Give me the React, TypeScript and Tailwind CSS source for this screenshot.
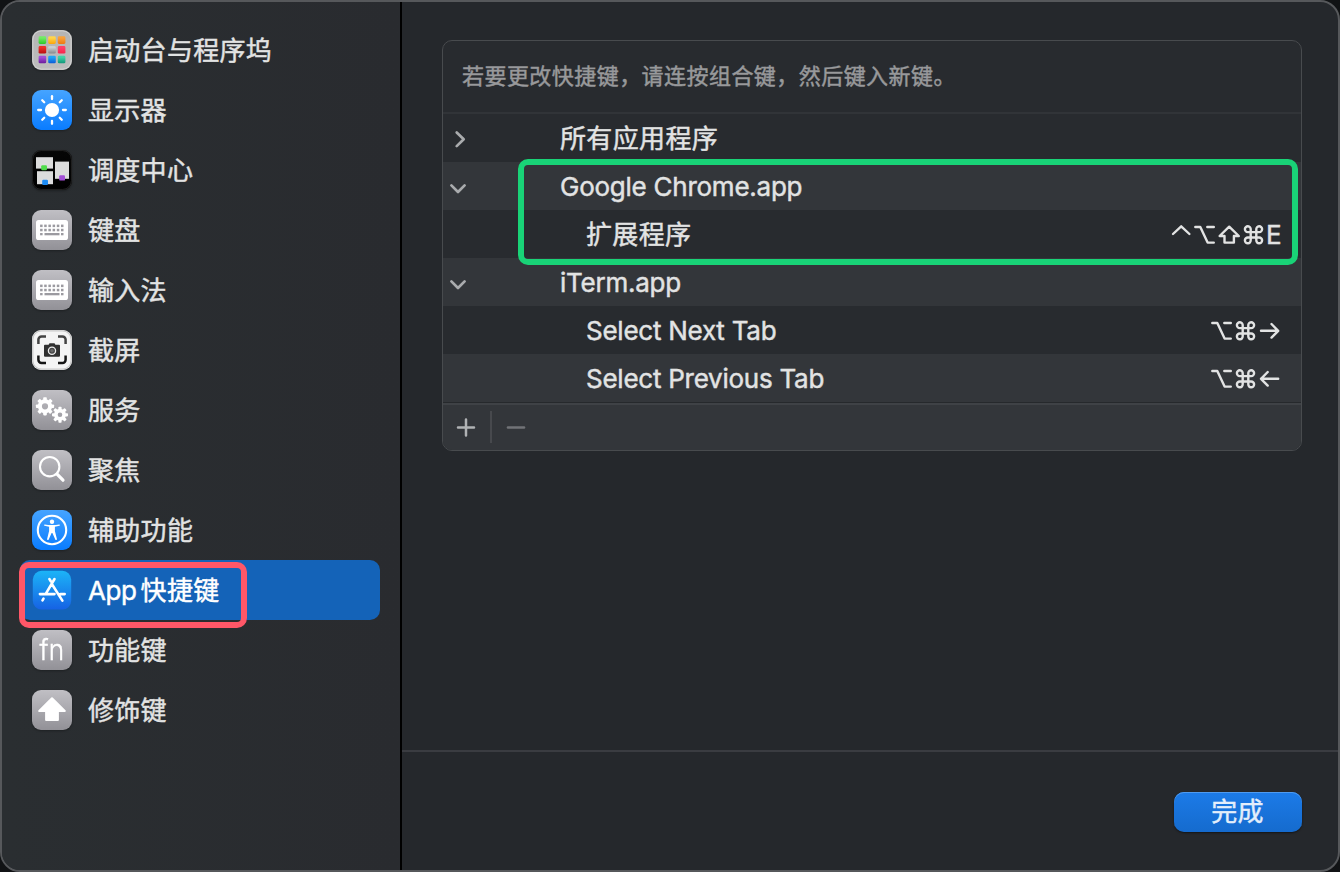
import type { ReactNode } from 'react';

function Tile({ from, to, children, id }: { from: string; to: string; id: string; children?: ReactNode }) {
  return (
    <svg viewBox="0 0 40 40" className="size-10 shrink-0 overflow-visible drop-shadow-[0_1px_1px_rgba(0,0,0,0.3)]">
      <defs>
        <linearGradient id={id} x1="0" y1="0" x2="0" y2="1">
          <stop offset="0" stopColor={from} />
          <stop offset="1" stopColor={to} />
        </linearGradient>
      </defs>
      <rect width="40" height="40" rx="9" fill={`url(#${id})`} />
      {children}
    </svg>
  );
}

const GREY_TOP = '#c0bfc4';
const GREY_BOTTOM = '#929197';

function LaunchpadIcon() {
  const tiles = [
    ['#72ec64', '#2ccb2c'], ['#ffd54b', '#fba60c'], ['#f9a13a', '#ee7a12'],
    ['#ef2f2a', '#b80f0f'], ['#c9ced1', '#86898c'], ['#ff3f68', '#f9234b'],
    ['#a44fd8', '#6a1a9c'], ['#22a6f4', '#0b5ad8'], ['#3fd3a6', '#12977a'],
  ];
  return (
    <Tile id="launchpad" from="#b4b4b4" to="#bdbdbd">
      <rect x="0.9" y="0.9" width="38.2" height="38.2" rx="8.4" fill="none" stroke="#d2d2d2" strokeWidth="1" />
      {tiles.map(([a, b], i) => (
        <g key={a}>
          <defs>
            <linearGradient id={`lp${i}`} x1="0" y1="0" x2="0" y2="1">
              <stop offset="0.2" stopColor={a} />
              <stop offset="1" stopColor={b} />
            </linearGradient>
          </defs>
          <rect x={6.6 + (i % 3) * 9.6} y={6.3 + Math.floor(i / 3) * 9.7} width="7.6" height="7.6" rx="1.4" fill={`url(#lp${i})`} />
        </g>
      ))}
    </Tile>
  );
}

function DisplayIcon() {
  return (
    <Tile id="display" from="#46a4ff" to="#0a7cff">
      <circle cx="20" cy="20" r="7.1" fill="#fff" />
      {[0, 45, 90, 135, 180, 225, 270, 315].map((a) => (
        <line key={a} x1="20" y1="6.200" x2="20" y2="9" stroke="#fff" strokeWidth="2.3" strokeLinecap="round" transform={`rotate(${a} 20 20)`} />
      ))}
    </Tile>
  );
}

function MissionControlIcon() {
  return (
    <Tile id="mission" from="#060606" to="#000000">
      <rect x="0.6" y="0.6" width="38.8" height="38.8" rx="8.6" fill="none" stroke="#2b2b2b" strokeWidth="0.8" />
      <rect x="4" y="7.2" width="17" height="11.4" fill="#dcdcdc" />
      <rect x="5" y="21.2" width="16" height="13" fill="#dcdcdc" />
      <rect x="23" y="11.6" width="14" height="17.2" fill="#dcdcdc" />
      <rect x="9.2" y="15.2" width="5.8" height="5" rx="1.2" fill="#4fdc4a" />
      <rect x="10.2" y="29.8" width="5.8" height="5.2" rx="1.2" fill="#1d8cf5" />
      <rect x="27.2" y="25.2" width="5.8" height="5.4" rx="1.2" fill="#a34fd6" />
    </Tile>
  );
}

function KeyboardIcon({ id }: { id: string }) {
  const cols = [8.1, 12.2, 16.4, 20.6, 24.8, 29];
  return (
    <Tile id={id} from={GREY_TOP} to={GREY_BOTTOM}>
      <rect x="4" y="10" width="32" height="20" rx="2.6" fill="#fff" />
      <g fill="#9b9aa0">
        {cols.map((x) => <rect key={x} x={x} y="14.600" width="2.500" height="2.500" />)}
        {cols.map((x) => <rect key={x} x={x} y="18.800" width="2.500" height="2.500" />)}
        <rect x="8.100" y="23" width="2.500" height="2.300" />
        <rect x="12.500" y="23" width="15" height="2.300" />
        <rect x="29" y="23" width="2.500" height="2.300" />
      </g>
    </Tile>
  );
}

function ScreenshotIcon() {
  return (
    <Tile id="shot" from="#f4f4f4" to="#f4f4f4">
      <rect x="0.8" y="0.8" width="38.4" height="38.4" rx="8.6" fill="none" stroke="#c9c9c9" strokeWidth="1.2" />
      <path d="M6.400 14V9.600a3.200 3.200 0 0 1 3.200-3.200H14M26 6.400H30.400a3.200 3.200 0 0 1 3.200 3.200V14" fill="none" stroke="#434343" strokeWidth="2.5" />
      <path d="M33.600 25.400v4.400a3.200 3.200 0 0 1-3.200 3.200H26M14 33H9.600a3.200 3.200 0 0 1-3.200-3.200v-4.400" fill="none" stroke="#151515" strokeWidth="2.5" />
      <path d="M13 14.800h3.600l.9-1.500h5l.9 1.500H27a1 1 0 0 1 1 1v10a1 1 0 0 1-1 1H13a1 1 0 0 1-1-1v-10a1 1 0 0 1 1-1Z" fill="#303030" />
      <circle cx="20" cy="20.700" r="3.600" fill="#444" stroke="#ededed" strokeWidth="1.300" />
      <circle cx="20" cy="20.700" r="1.800" fill="#6a6a6a" />
    </Tile>
  );
}

function Gear({ cx, cy, r, hole }: { cx: number; cy: number; r: number; hole: number }) {
  const body = r - 2;
  return (
    <g transform={`translate(${cx} ${cy})`}>
      <circle r={(body + hole) / 2} fill="none" stroke="#fff" strokeWidth={body - hole} />
      {[0, 45, 90, 135, 180, 225, 270, 315].map((a) => (
        <rect key={a} x={-r * 0.2} y={-r} width={r * 0.4} height="3" rx="0.8" fill="#fff" transform={`rotate(${a})`} />
      ))}
    </g>
  );
}

function ServicesIcon() {
  return (
    <Tile id="services" from={GREY_TOP} to={GREY_BOTTOM}>
      <Gear cx={13} cy={16.3} r={9.1} hole={3.1} />
      <Gear cx={28} cy={24.8} r={8} hole={2.3} />
    </Tile>
  );
}

function SpotlightIcon() {
  return (
    <Tile id="spot" from={GREY_TOP} to={GREY_BOTTOM}>
      <circle cx="17.7" cy="16.7" r="9.7" fill="none" stroke="#fff" strokeWidth="2.1" />
      <line x1="25.300" y1="24.300" x2="31" y2="30.200" stroke="#fff" strokeWidth="3.200" strokeLinecap="round" />
    </Tile>
  );
}

function AccessibilityIcon() {
  return (
    <Tile id="a11y" from="#46a4ff" to="#0a7cff">
      <circle cx="20" cy="20" r="14.2" fill="none" stroke="#fff" strokeWidth="2.1" />
      <circle cx="20" cy="11.7" r="2.2" fill="#fff" />
      <path d="M12.900 14.400c2 .4 4.200.6 7.100.6s5.100-.2 7.100-.6c.9-.2 1.200 1.100.3 1.400l-4.500 1v4.300l2 8c.2 1-1.200 1.400-1.600.5L20.400 23h-.8l-2.900 6.600c-.4.9-1.800.5-1.600-.5l2-8v-4.300l-4.500-1c-.9-.3-.6-1.600.3-1.400Z" fill="#fff" />
    </Tile>
  );
}

function AppStoreIcon() {
  return (
    <svg viewBox="0 0 40 40" className="size-10 shrink-0">
      <defs>
        <linearGradient id="store" x1="0" y1="0" x2="0" y2="1">
          <stop offset="0" stopColor="#1cb4f7" />
          <stop offset="1" stopColor="#1662e4" />
        </linearGradient>
      </defs>
      <rect x="0.8" y="0.8" width="38.4" height="38.8" rx="8.8" fill="url(#store)" />
      <g stroke="#fff" strokeWidth="2.6" strokeLinecap="round" fill="none">
        <path d="M22.500 9 13.900 23.600M17.400 9l1.400 2.300M20.300 14.800 30.400 30.600M7.900 24.100h14.600M28.500 24.100h4.200M11.500 28.700l-1 1.700" />
      </g>
    </svg>
  );
}

function FnIcon() {
  return (
    <Tile id="fn" from={GREY_TOP} to={GREY_BOTTOM}>
      <text x="20" y="30" textAnchor="middle" fill="#fff" fontSize="28" fontWeight="300" fontFamily="Inter, sans-serif" textLength="25" lengthAdjust="spacingAndGlyphs" stroke="#fff" strokeWidth="0.4">fn</text>
    </Tile>
  );
}

function ModifierIcon() {
  return (
    <Tile id="modifier" from={GREY_TOP} to={GREY_BOTTOM}>
      <path d="M20 8.200 7.200 21h6.900v9h11.800v-9h6.900Z" fill="#fff" stroke="#fff" strokeWidth="2" strokeLinejoin="round" />
    </Tile>
  );
}

const items: { label: string; icon: ReactNode }[] = [
  { label: '启动台与程序坞', icon: <LaunchpadIcon /> },
  { label: '显示器', icon: <DisplayIcon /> },
  { label: '调度中心', icon: <MissionControlIcon /> },
  { label: '键盘', icon: <KeyboardIcon id="keyboard" /> },
  { label: '输入法', icon: <KeyboardIcon id="input" /> },
  { label: '截屏', icon: <ScreenshotIcon /> },
  { label: '服务', icon: <ServicesIcon /> },
  { label: '聚焦', icon: <SpotlightIcon /> },
  { label: '辅助功能', icon: <AccessibilityIcon /> },
  { label: 'App快捷键', icon: <AppStoreIcon /> },
  { label: '功能键', icon: <FnIcon /> },
  { label: '修饰键', icon: <ModifierIcon /> },
];

function Sidebar() {
  return (
    <nav className="w-[400px] shrink-0 border-r-2 border-black bg-linear-to-r from-[#2a2e31] to-[#292b2f] pl-[18px] pr-5 pt-[18px] tracking-[0.3px]">
      {items.map(({ label, icon }) =>
        label.startsWith('App') ? (
          <div key={label} className="relative flex h-[60px] items-center gap-4 rounded-[10px] bg-[#1463b8] pl-3 text-white">
            {icon}
            <span className="flex items-center gap-1 pt-0.5">
              <span className="tracking-[-0.4px]">App</span>
              <span>快捷键</span>
            </span>
            <div className="absolute -left-px top-0.5 h-[66px] w-[228px] rounded-[10px] border-[6px] border-[#ff5768]" />
          </div>
        ) : (
          <div key={label} className="flex h-[60px] items-center gap-4 pl-3">
            {icon}
            <span className="pt-0.5">{label}</span>
          </div>
        )
      )}
    </nav>
  );
}

function Glyph({ w, label, children }: { w: number; label: string; children: ReactNode }) {
  return (
    <svg width={w} height="24" viewBox={`0 0 ${w} 24`} fill="none" stroke="currentColor" strokeWidth="2.4" strokeLinecap="round" strokeLinejoin="round" aria-label={label}>
      {children}
    </svg>
  );
}

const Control = () => <Glyph w={22} label="Control"><path d="M2 12 10.200 4.300 18.400 12" /></Glyph>;
const Option = () => <Glyph w={24} label="Option"><path d="M2.300 5h5l7.300 15.600h6.200M14.300 5H20.800" /></Glyph>;
const Shift = () => <Glyph w={25} label="Shift"><path d="M12.200 4.700 2.600 14h4.900v6.600h9.400V14h4.900Z" /></Glyph>;
const Command = () => (
  <Glyph w={24} label="Command">
    <path d="M8.700 10.100h5.600v5.400H8.700ZM8.700 10.100V7.400a2.900 2.900 0 1 0-2.900 2.700ZM14.300 10.100V7.400a2.900 2.900 0 1 1 2.900 2.700ZM8.700 15.500v2.700a2.900 2.900 0 1 1-2.900-2.700ZM14.300 15.500v2.700a2.900 2.900 0 1 0 2.900-2.700Z" />
  </Glyph>
);
const Right = () => <Glyph w={23} label="Right"><path d="M3 12.800h17M13.500 6l6.700 6.800-6.700 6.800" /></Glyph>;
const Left = () => <Glyph w={23} label="Left"><path d="M20.200 12.800H3M9.700 6 3 12.800l6.700 6.800" /></Glyph>;

function Chevron({ open }: { open: boolean }) {
  return (
    <svg viewBox="0 0 32 32" className="size-8" fill="none" stroke="#a9abad" strokeWidth="2.7" strokeLinecap="round" strokeLinejoin="round">
      {open ? <path d="M8.400 15.400 15 22l6.600-6.600" /> : <path d="m13.700 10.500 7 6.800-7 6.800" />}
    </svg>
  );
}

const LATIN = 'pt-px tracking-[-0.25px]';
const HAN = 'pt-0.5 tracking-[0.35px]';

function Row({ text, open, child, odd, latin, keys }: { text: string; open?: boolean; child?: boolean; odd?: boolean; latin?: boolean; keys?: ReactNode }) {
  return (
    <div className={`flex h-12 items-center pr-5 ${odd ? 'bg-[#33363a]' : 'bg-[#282b2f]'}`}>
      <div className="w-[117px] shrink-0">{open !== undefined && <Chevron open={open} />}</div>
      <span className={`${child ? 'pl-[26px]' : ''} ${latin ? LATIN : HAN}`}>{text}</span>
      <div className="ml-auto flex items-center">{keys}</div>
    </div>
  );
}

function ShortcutTable() {
  return (
    <section className="flex h-[411px] flex-col overflow-hidden rounded-[10px] border border-[#484b4e] bg-[#282b2f]">
      <div className="flex h-[73px] shrink-0 items-center border-b-2 border-[#313438] pb-px pl-[19px] text-[22px] tracking-[0.45px] text-[#98999b]">
        若要更改快捷键，请连按组合键，然后键入新键。
      </div>
      <Row text="所有应用程序" open={false} />
      <div className="relative">
        <Row text="Google Chrome.app" open odd latin />
        <Row
          text="扩展程序"
          child
          keys={<><Control /><Option /><Shift /><Command /><span className="w-[15px] pt-px">E</span></>}
        />
        <div className="absolute -top-[3.5px] left-[75px] h-[106px] w-[780px] rounded-[10px] border-[6px] border-[#19d377]" />
      </div>
      <Row text="iTerm.app" open odd latin />
      <Row text="Select Next Tab" child latin keys={<><Option /><Command /><Right /></>} />
      <Row text="Select Previous Tab" child odd latin keys={<><Option /><Command /><Left /></>} />
      <div className="flex flex-1 items-center border-t border-[#26292c] bg-[#33363a] shadow-[inset_0_2px_0_#3f4246]">
        <svg viewBox="0 0 47 46" className="h-[46px] w-[47px]" stroke="#b0b2b4" strokeWidth="2.5" strokeLinecap="round">
          <path d="M15 23.500h16M23 15.500v16" />
        </svg>
        <div className="h-8 w-0.5 bg-[#47494d]" />
        <svg viewBox="0 0 48 46" className="h-[46px] w-12" stroke="#717377" strokeWidth="2.6" strokeLinecap="round">
          <path d="M16 23.500h16" />
        </svg>
      </div>
    </section>
  );
}

export default function App() {
  return (
    <div className="h-[872px] w-[1340px] overflow-hidden bg-[#111315]">
      <div
        className="flex h-full w-full overflow-hidden rounded-[20px] border-2 border-[#56585b] bg-[#25282c] text-[26px] leading-[36px] text-[#e2e3e3] [-webkit-text-stroke:0.45px_currentColor] [font-family:Inter,'Noto_Sans_CJK_SC',sans-serif]"
      >
        <Sidebar />
        <main className="flex flex-1 flex-col">
          <div className="flex-1 pl-10 pr-9 pt-[38px]">
            <ShortcutTable />
          </div>
          <footer className="flex h-[120px] items-center justify-end border-t-2 border-[#3a3c41] pr-9 pt-0.5">
            <button className="flex h-10 w-32 items-center justify-center rounded-[10px] bg-linear-to-b from-[#1c7be8] to-[#156bce] pr-px tracking-[0.3px] text-[#e3eefb] shadow-[inset_0_1px_0_#4f9bf0,0_1px_2px_rgba(0,0,0,0.5)]">
              完成
            </button>
          </footer>
        </main>
      </div>
    </div>
  );
}
